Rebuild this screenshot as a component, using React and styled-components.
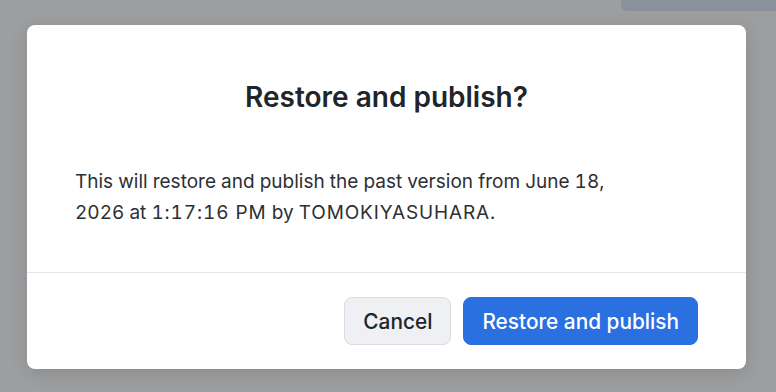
import React from "react";
import styled, { createGlobalStyle } from "styled-components";

const Global = createGlobalStyle`
  html, body {
    margin: 0;
    padding: 0;
    font-family: Inter, "Noto Sans", sans-serif;
  }
`;

const Backdrop = styled.div`
  width: 776px;
  height: 392px;
  background: #9d9e9f;
  overflow: hidden;
`;

const TopBar = styled.div`
  display: flex;
  justify-content: flex-end;
  height: 11px;
`;

const TopBlock = styled.div`
  width: 155px;
  background: #8a909c;
  border-bottom-left-radius: 6px;
`;

const Dialog = styled.div`
  margin: 14px 0 0 27px;
  width: 719px;
  height: 344px;
  background: #ffffff;
  border-radius: 8px;
  box-shadow: 0 4px 18px rgba(0, 0, 0, 0.12);
  display: flex;
  flex-direction: column;
  box-sizing: border-box;
`;

const Title = styled.h2`
  margin: 0;
  padding: 56px 48px 0;
  text-align: center;
  font-size: 28px;
  line-height: 32px;
  font-weight: 600;
  color: #212529;
`;

const Body = styled.p`
  margin: 53px 0 0;
  padding: 0 48px 44px;
  max-width: 560px;
  font-size: 19px;
  line-height: 31px;
  font-variant-numeric: tabular-nums;
  color: #2c3035;
`;

const Stamp = styled.span`
  letter-spacing: ${(p) => p.spread || "0.6px"};
`;

const Footer = styled.div`
  border-top: 1px solid #e6e6ea;
  padding: 24px 48px 24px;
  display: flex;
  justify-content: flex-end;
  gap: 12px;
`;

const Button = styled.button`
  height: 48px;
  padding: 0 18px;
  border-radius: 8px;
  font-family: Inter, "Noto Sans", sans-serif;
  font-size: 20.8px;
  font-weight: 500;
  border: 1px solid ${(p) => (p.primary ? "#2a70e0" : "#d9dce1")};
  background: ${(p) => (p.primary ? "#2a70e0" : "#eef0f3")};
  color: ${(p) => (p.primary ? "#ffffff" : "#212529")};
  cursor: pointer;
`;

export default function App() {
  return (
    <>
      <Global />
      <Backdrop>
        <TopBar>
          <TopBlock />
        </TopBar>
        <Dialog>
          <Title>Restore and publish?</Title>
          <Body>
            This will restore and publish the past version from June 18, 2026 at{" "}
            <Stamp spread="0.9px">1:17:16 PM</Stamp> by{" "}
            <Stamp spread="0.85px">TOMOKIYASUHARA.</Stamp>
          </Body>
          <Footer>
            <Button>Cancel</Button>
            <Button primary>Restore and publish</Button>
          </Footer>
        </Dialog>
      </Backdrop>
    </>
  );
}
